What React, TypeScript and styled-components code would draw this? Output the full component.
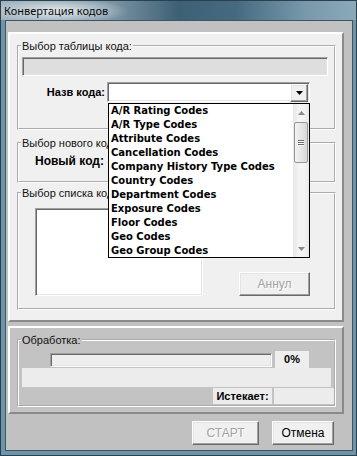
import styled, { createGlobalStyle, css } from "styled-components";

const GlobalStyle = createGlobalStyle`
  html, body {
    margin: 0;
    padding: 0;
    background: #c0c0c0;
  }
  body {
    font-family: "Liberation Sans", Arial, sans-serif;
    font-size: 11px;
    color: #000;
  }
`;

const raised = css`
  border: 1px solid;
  border-color: #ffffff #696969 #696969 #ffffff;
  box-shadow: inset -1px -1px 0 #a0a0a0, inset 1px 1px 0 #e3e3e3;
`;

const sunken = css`
  border: 1px solid;
  border-color: #a0a0a0 #ffffff #ffffff #a0a0a0;
  box-shadow: inset 1px 1px 0 #696969, inset -1px -1px 0 #e3e3e3;
`;

const Window = styled.div`
  width: 357px;
  height: 456px;
  box-sizing: border-box;
  display: flex;
  flex-direction: column;
  background: #6f93a7;
  border: 1px solid #2b3f4c;
  padding: 0 3px 4px 4px;
`;

const TitleBar = styled.div`
  height: 19px;
  margin: 0 -3px 0 -4px;
  padding-left: 3px;
  display: flex;
  align-items: center;
  font-family: "Noto Sans", "Open Sans", sans-serif;
  font-size: 11px;
  color: #0a0a0a;
  background:
    radial-gradient(ellipse 72px 13px at 56px 10px, rgba(236, 240, 242, 0.95), rgba(236, 240, 242, 0) 100%),
    linear-gradient(90deg, #9fb3be 0%, #7f98a7 30%, #3e6075 50%, #456a80 66%, #7999ab 86%, #8aa9b9 100%);
`;

const Client = styled.div`
  flex: 1;
  display: flex;
  flex-direction: column;
  background: #c2c1c1;
  border: 1px solid #3d5566;
  padding: 11px 8px 0 2px;
`;

const Panel = styled.div<{ $tone?: "light" | "grey" }>`
  border: 2px solid;
  border-color: #ffffff #8a8a8a #8a8a8a #ffffff;
  background: ${({ $tone }) => ($tone === "grey" ? "#c3c3c3" : "#f0f0f0")};
  padding: 5px 6px 10px 7px;
  & + & {
    margin-top: 4px;
    padding-bottom: 5px;
  }
`;

const GroupBox = styled.fieldset<{ $gap?: number }>`
  margin: ${({ $gap }) => $gap ?? 0}px 0 0 0;
  padding: 0;
  border: 2px groove #ffffff;
  min-width: 0;
`;

const Legend = styled.legend`
  margin-left: 2px;
  padding: 0 1px;
  font-size: 11px;
  line-height: 14px;
  color: #111;
  white-space: nowrap;
`;

const ReadOnlyField = styled.div`
  ${sunken};
  height: 19px;
  box-sizing: border-box;
  margin: 4px 6px 26px 3px;
  background: #dedede;
`;

const FieldRow = styled.div`
  display: flex;
  align-items: center;
  margin: -20px 0 26px 0;
`;

const BoldLabel = styled.span<{ $size?: number }>`
  font-weight: bold;
  font-size: ${({ $size }) => $size ?? 11}px;
`;

const RightLabel = styled(BoldLabel)`
  width: 86px;
  text-align: right;
  margin-right: 2px;
`;

const Combo = styled.div`
  ${sunken};
  position: relative;
  width: 203px;
  height: 20px;
  box-sizing: border-box;
  background: #fff;
  padding: 1px;
  display: flex;
  justify-content: flex-end;
`;

const ComboButton = styled.div`
  ${raised};
  width: 16px;
  height: 16px;
  background: #f0f0f0;
  display: flex;
  align-items: center;
  justify-content: center;
`;

// open list of the combo, drawn over the boxes below it
const DropList = styled.div`
  position: absolute;
  z-index: 5;
  top: calc(100% + 2px);
  left: 0;
  width: 202px;
  height: 155px;
  box-sizing: border-box;
  border: 1px solid #000;
  background: #fff;
  display: flex;
`;

const Items = styled.ul`
  flex: 1;
  margin: 0;
  padding: 0;
  list-style: none;
  overflow: hidden;
`;

const Item = styled.li`
  height: 14px;
  line-height: 14px;
  padding-left: 2px;
  font-family: "DejaVu Sans", Verdana, sans-serif;
  font-weight: bold;
  font-size: 10px;
  white-space: nowrap;
`;

const ScrollTrack = styled.div`
  width: 16px;
  display: flex;
  flex-direction: column;
  background: linear-gradient(90deg, #e8e8e8, #f4f4f4 40%, #f4f4f4 70%, #e8e8e8);
`;

const ScrollArrow = styled.div`
  height: 17px;
  display: flex;
  align-items: center;
  justify-content: center;
`;

const Thumb = styled.div`
  margin: 1px 1px 0 1px;
  height: 41px;
  box-sizing: border-box;
  border: 1px solid #979797;
  border-radius: 2px;
  background: linear-gradient(90deg, #f3f3f3, #e6e6e6 50%, #d8d8d8);
  display: flex;
  flex-direction: column;
  align-items: center;
  justify-content: center;
  gap: 1px;
`;

const Grip = styled.span`
  width: 6px;
  height: 1px;
  background: #6b6b6b;
  box-shadow: 0 1px 0 #ffffff;
`;

const TrackRest = styled.div`
  flex: 1;
`;

const NewCodeRow = styled.div`
  height: 18px;
  display: flex;
  align-items: center;
  padding-left: 16px;
  margin: 2px 0 11px 0;
`;

const ListRow = styled.div`
  display: flex;
  align-items: flex-end;
  padding: 8px 0 12px 16px;
`;

const ListBox = styled.div`
  ${sunken};
  width: 168px;
  height: 88px;
  box-sizing: border-box;
  background: #fff;
`;

const Button = styled.button<{ $disabled?: boolean; $width: number }>`
  ${raised};
  width: ${({ $width }) => $width}px;
  height: 24px;
  padding: 0;
  background: #f0f0f0;
  font-family: "Liberation Sans", Arial, sans-serif;
  font-size: 12px;
  color: ${({ $disabled }) => ($disabled ? "#a3a3a3" : "#000")};
  text-shadow: ${({ $disabled }) => ($disabled ? "1px 1px 0 #ffffff" : "none")};
`;

const CancelSide = styled.div`
  margin-left: 36px;
`;

const ProgressRow = styled.div`
  display: flex;
  align-items: center;
  margin: 4px 0 0 31px;
`;

const ProgressBar = styled.div`
  ${sunken};
  width: 222px;
  height: 14px;
  box-sizing: border-box;
  background: #eeeeee;
`;

const Percent = styled.div`
  width: 34px;
  height: 17px;
  margin-left: 3px;
  background: #eeeeee;
  font-weight: bold;
  font-size: 11px;
  line-height: 17px;
  text-align: center;
`;

const StatusBand = styled.div`
  height: 19px;
  margin: 0 3px;
  background: #ececec;
`;

const EtaRow = styled.div`
  display: flex;
  justify-content: flex-end;
  gap: 2px;
  margin: 1px 0 1px 0;
`;

const EtaCell = styled.div<{ $width: number }>`
  width: ${({ $width }) => $width}px;
  height: 16px;
  background: #ececec;
  font-weight: bold;
  font-size: 11px;
  line-height: 16px;
  text-align: center;
`;

const ButtonBar = styled.div`
  display: flex;
  justify-content: flex-end;
  gap: 13px;
  margin-top: 7px;
  padding-right: 10px;
`;

const codes = [
  "A/R Rating Codes",
  "A/R Type Codes",
  "Attribute Codes",
  "Cancellation Codes",
  "Company History Type Codes",
  "Country Codes",
  "Department Codes",
  "Exposure Codes",
  "Floor Codes",
  "Geo Codes",
  "Geo Group Codes",
];

const Triangle = ({ up, color }: { up?: boolean; color: string }) => (
  <svg width="7" height="4" viewBox="0 0 7 4">
    <path d={up ? "M0 4 L3.5 0 L7 4 Z" : "M0 0 L7 0 L3.5 4 Z"} fill={color} />
  </svg>
);

const App = () => {
  return (
    <>
      <GlobalStyle />
      <Window>
        <TitleBar>Конвертация кодов</TitleBar>
        <Client>
          <Panel>
            <GroupBox>
              <Legend>Выбор таблицы кода:</Legend>
              <ReadOnlyField />
              <FieldRow>
                <RightLabel>Назв кода:</RightLabel>
                <Combo>
                  <ComboButton>
                    <Triangle color="#000" />
                  </ComboButton>
                  <DropList>
                    <Items>
                      {codes.map((c) => (
                        <Item key={c}>{c}</Item>
                      ))}
                    </Items>
                    <ScrollTrack>
                      <ScrollArrow>
                        <Triangle up color="#8a8a8a" />
                      </ScrollArrow>
                      <Thumb>
                        <Grip />
                        <Grip />
                        <Grip />
                      </Thumb>
                      <TrackRest />
                      <ScrollArrow>
                        <Triangle color="#8a8a8a" />
                      </ScrollArrow>
                    </ScrollTrack>
                  </DropList>
                </Combo>
              </FieldRow>
            </GroupBox>
            <GroupBox $gap={6}>
              <Legend>Выбор нового кода:</Legend>
              <NewCodeRow>
                <BoldLabel $size={12}>Новый код:</BoldLabel>
              </NewCodeRow>
            </GroupBox>
            <GroupBox $gap={3}>
              <Legend>Выбор списка кодов:</Legend>
              <ListRow>
                <ListBox />
                <CancelSide>
                  <Button $disabled $width={71}>
                    Аннул
                  </Button>
                </CancelSide>
              </ListRow>
            </GroupBox>
          </Panel>
          <Panel $tone="grey">
            <GroupBox>
              <Legend>Обработка:</Legend>
              <ProgressRow>
                <ProgressBar />
                <Percent>0%</Percent>
              </ProgressRow>
              <StatusBand />
              <EtaRow>
                <EtaCell $width={59}>Истекает:</EtaCell>
                <EtaCell $width={60} />
              </EtaRow>
            </GroupBox>
          </Panel>
          <ButtonBar>
            <Button $disabled $width={67}>
              СТАРТ
            </Button>
            <Button $width={62}>Отмена</Button>
          </ButtonBar>
        </Client>
      </Window>
    </>
  );
};

export default App;
